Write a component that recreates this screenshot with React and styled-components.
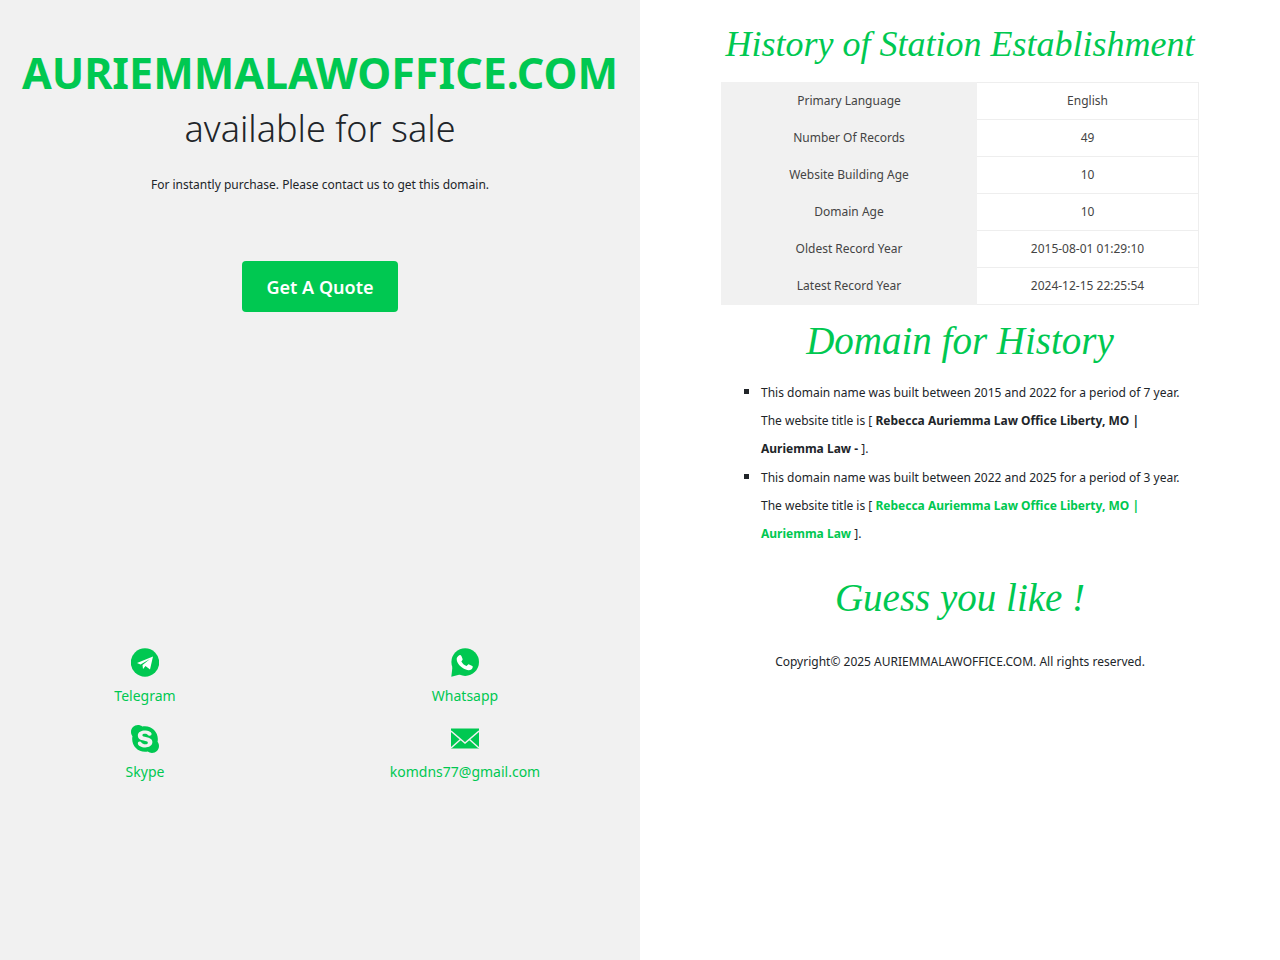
import React from "react";
import styled, { createGlobalStyle } from "styled-components";
import { FaSkype } from "react-icons/fa";

const GREEN = "#00c851";
const INK = "#212529";

const GlobalStyle = createGlobalStyle`
  *, *::before, *::after { box-sizing: border-box; }
  body {
    margin: 0;
    background: #fff;
    color: ${INK};
    font-family: "Noto Sans", "Open Sans", sans-serif;
    font-size: 12px;
    line-height: 24px;
  }
  a { color: inherit; text-decoration: none; }
`;

const Page = styled.div`
  display: grid;
  grid-template-columns: 1fr 1fr;
  min-height: 100vh;
`;

const SalePanel = styled.section`
  display: flex;
  flex-direction: column;
  background: #f1f1f1;
  text-align: center;
`;

const Offer = styled.div`
  display: flex;
  flex-direction: column;
  align-items: center;
  min-height: 640px;
  padding-top: 45px;
`;

const DomainTitle = styled.h1`
  margin: 0;
  color: ${GREEN};
  font-size: 43px;
  font-weight: 700;
  line-height: 56px;
`;

const Tagline = styled.p`
  margin: 0;
  font-size: 36px;
  font-weight: 300;
  line-height: 56px;
`;

const Note = styled.p`
  margin: 16px 0 64px;
`;

const QuoteButton = styled.button`
  height: 51px;
  padding: 0 25px;
  border: 0;
  border-radius: 4px;
  background: ${GREEN};
  color: #fff;
  font: 600 18px "Noto Sans", sans-serif;
  cursor: pointer;
`;

const Contacts = styled.nav`
  display: grid;
  grid-template-columns: 1fr 1fr;
  row-gap: 8px;
`;

const Contact = styled.a`
  display: flex;
  flex-direction: column;
  align-items: center;
  gap: 6px;
  height: 68px;
  margin-right: 30px;
  padding-top: 8px;
  color: ${GREEN};
  font-size: 14px;
  line-height: 24px;
`;

const IconSlot = styled.span`
  display: flex;
  align-items: center;
  justify-content: center;
  height: 30px;

  svg { flex: none; }
`;

const HistoryPanel = styled.main`
  width: 75%;
  margin: 0 auto;
  padding: 16px 1px 0;
  text-align: center;
`;

const ScriptHeading = styled.h2`
  margin: 0;
  color: ${GREEN};
  font: italic 400 ${(p) => (p.$long ? 36 : 39)}px/56px "Liberation Serif", serif;
`;

const Records = styled.table`
  width: 100%;
  margin: 10px 0 8px;
  border-collapse: collapse;

  th, td {
    height: 37px;
    padding: 0;
    border: 1px solid #eee;
    color: #444;
    font-weight: 400;
  }
  th { width: 255px; background: #f1f1f1; border-color: #f1f1f1; }
`;

const Timeline = styled.ul`
  margin: 9px 0 22px;
  padding-left: 40px;
  list-style: square;
  line-height: 28px;
  text-align: left;

  li::marker { font-size: 14px; }
`;

const SiteTitle = styled.strong`
  color: ${(p) => (p.$current ? GREEN : INK)};
`;

const Copyright = styled.footer`
  margin-top: 24px;
`;

const records = [
  ["Primary Language", "English"],
  ["Number Of Records", "49"],
  ["Website Building Age", "10"],
  ["Domain Age", "10"],
  ["Oldest Record Year", "2015-08-01 01:29:10"],
  ["Latest Record Year", "2024-12-15 22:25:54"],
];

const TelegramIcon = () => (
  <svg width="28" height="30" viewBox="0 0 28 30" aria-hidden="true">
    <circle cx="14" cy="14.5" r="14.2" fill={GREEN} />
    <path d="M6 15 22 8.500 19 21.500 14.500 18 12 21 11.500 17 19 11 9.500 16.500Z" fill="#fff" />
  </svg>
);

const WhatsappIcon = () => (
  <svg width="28" height="30" viewBox="0 0 28 30" aria-hidden="true">
    <circle cx="14.2" cy="14.1" r="13.8" fill={GREEN} />
    <path d="M1.500 18.500 .3 28.700 9 26.500Z" fill={GREEN} />
    <path d="M7.600 7.700c1-1.200 2.200-1 2.800.3l1.200 2.900c.3.900-.8 1.800-1.300 2.400 1 2.200 2.900 3.900 5.300 4.800.8-.7 1.500-2.100 2.500-1.700l3.200 1.600c1 .5.200 2.500-.7 3.200-2.200 1.700-5.500 1-8.500-.9-3.700-2.400-6.500-6.100-6.400-9.300 0-1.400.8-2.300 1.900-3.300Z" fill="#fff" />
  </svg>
);

const MailIcon = () => (
  <svg width="28" height="30" viewBox="0 0 28 30" aria-hidden="true">
    <path d="M0 4.500h28v20H0Z" fill={GREEN} />
    <path d="m0 7 14 12 14-12M0 24l9.500-8.500M28 24 18.500 15.500" fill="none" stroke="#f1f1f1" strokeWidth="1.400" />
  </svg>
);

export default function App() {
  return (
    <>
      <GlobalStyle />
      <Page>
        <SalePanel>
          <Offer>
            <DomainTitle>AURIEMMALAWOFFICE.COM</DomainTitle>
            <Tagline>available for sale</Tagline>
            <Note>For instantly purchase. Please contact us to get this domain.</Note>
            <QuoteButton type="button">Get A Quote</QuoteButton>
          </Offer>
          <Contacts>
            <Contact href="#telegram"><IconSlot><TelegramIcon /></IconSlot>Telegram</Contact>
            <Contact href="#whatsapp"><IconSlot><WhatsappIcon /></IconSlot>Whatsapp</Contact>
            <Contact href="#skype"><IconSlot><FaSkype size={32} color={GREEN} /></IconSlot>Skype</Contact>
            <Contact href="mailto:komdns77@gmail.com"><IconSlot><MailIcon /></IconSlot>komdns77@gmail.com</Contact>
          </Contacts>
        </SalePanel>
        <HistoryPanel>
          <ScriptHeading $long>History of Station Establishment</ScriptHeading>
          <Records>
            <tbody>
              {records.map(([label, value]) => (
                <tr key={label}>
                  <th scope="row">{label}</th>
                  <td>{value}</td>
                </tr>
              ))}
            </tbody>
          </Records>
          <ScriptHeading>Domain for History</ScriptHeading>
          <Timeline>
            <li>
              This domain name was built between 2015 and 2022 for a period of 7 year. The website title is [{" "}
              <SiteTitle>Rebecca Auriemma Law Office Liberty, MO | Auriemma Law -</SiteTitle> ].
            </li>
            <li>
              This domain name was built between 2022 and 2025 for a period of 3 year. The website title is [{" "}
              <SiteTitle $current>Rebecca Auriemma Law Office Liberty, MO | Auriemma Law</SiteTitle> ].
            </li>
          </Timeline>
          <ScriptHeading>Guess you like !</ScriptHeading>
          <Copyright>Copyright© 2025 AURIEMMALAWOFFICE.COM. All rights reserved.</Copyright>
        </HistoryPanel>
      </Page>
    </>
  );
}
